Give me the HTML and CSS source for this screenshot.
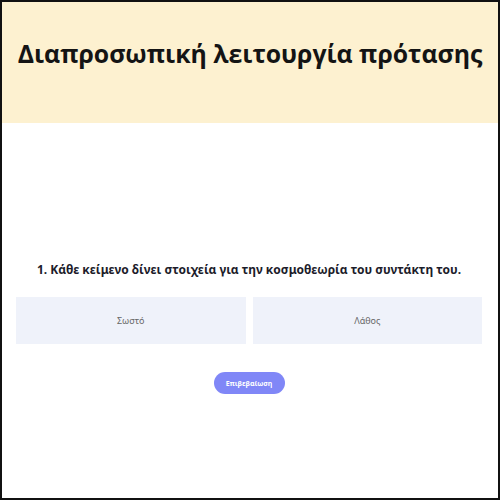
FILE: index.html
```html
<!DOCTYPE html>
<html lang="el">
<head>
<meta charset="utf-8">
<link rel="stylesheet" href="styles.css">
</head>
<body>
<div class="frame">
  <header class="hero">
    <h1 class="title">Διαπροσωπική λειτουργία πρότασης</h1>
  </header>
  <main class="quiz">
    <p class="question">1. Κάθε κείμενο δίνει στοιχεία για την κοσμοθεωρία του συντάκτη του.</p>
    <div class="options">
      <div class="option">Σωστό</div>
      <div class="option">Λάθος</div>
    </div>
    <button class="submit">Επιβεβαίωση</button>
  </main>
</div>
</body>
</html>
```
FILE: styles.css
```css
html, body { margin: 0; padding: 0; background: #fff; }
.frame {
  width: 500px; height: 500px; box-sizing: border-box;
  border: 2px solid #111;
  display: flex; flex-direction: column;
  font-family: "Noto Sans", sans-serif;
}
.hero {
  height: 121px; background: #fdf1d0;
  display: flex; align-items: center; justify-content: center;
}
.title {
  margin: 0 0 20px; font-family: "Open Sans", sans-serif;
  font-weight: 700; font-size: 24.8px; color: #141414; letter-spacing: 0;
}
.quiz {
  display: flex; flex-direction: column; align-items: center;
  padding: 138px 16px 0 14px;
}
.question {
  margin: 0; font-size: 12px; font-weight: 700; color: #1c1c2a;
}
.options {
  margin-top: 19px; align-self: stretch;
  display: grid; grid-template-columns: 1fr 1fr; gap: 7px;
}
.option {
  height: 47px; background: #eff2fa;
  display: flex; align-items: center; justify-content: center;
  font-size: 9px; color: #666;
}
.submit {
  margin-top: 28px; width: 71px; height: 22px; border: none;
  border-radius: 11px; background: #8087f7; color: #fff;
  font-family: "Noto Sans", sans-serif; font-size: 7px; font-weight: 700;
}
```
